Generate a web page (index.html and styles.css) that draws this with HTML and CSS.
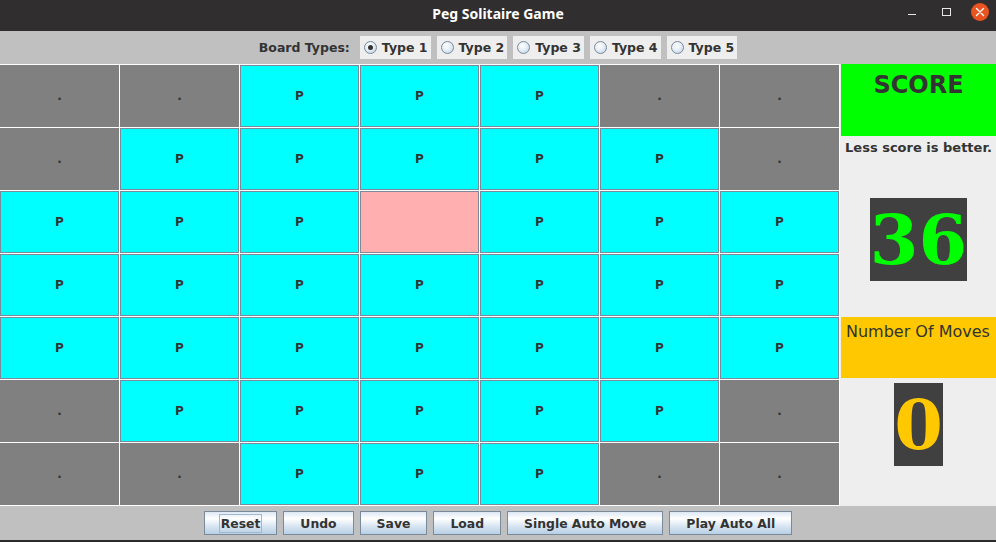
FILE: index.html
```html
<!DOCTYPE html>
<html>
<head>
<meta charset="utf-8">
<link rel="stylesheet" href="styles.css">
</head>
<body>
<div class="window">
  <header class="titlebar">
    <span class="title">Peg Solitaire Game</span>
    <div class="controls">
      <span class="ctl-min"></span>
      <span class="ctl-max"></span>
      <span class="ctl-close">
        <svg width="18" height="18" viewBox="0 0 18 18"><path d="M5.5 5.5 L12.5 12.5 M12.5 5.5 L5.5 12.5" stroke="#fff" stroke-width="1.4" stroke-linecap="round"/></svg>
      </span>
    </div>
  </header>
  <div class="toolbar">
    <span class="tb-label">Board Types:</span>
    <label class="radio"><span class="circle checked"></span>Type 1</label>
    <label class="radio"><span class="circle"></span>Type 2</label>
    <label class="radio"><span class="circle"></span>Type 3</label>
    <label class="radio"><span class="circle"></span>Type 4</label>
    <label class="radio"><span class="circle"></span>Type 5</label>
  </div>
  <div class="main">
    <div class="board">
      <div class="cell off">.</div><div class="cell off">.</div><div class="cell peg">P</div><div class="cell peg">P</div><div class="cell peg">P</div><div class="cell off">.</div><div class="cell off">.</div>
      <div class="cell off">.</div><div class="cell peg">P</div><div class="cell peg">P</div><div class="cell peg">P</div><div class="cell peg">P</div><div class="cell peg">P</div><div class="cell off">.</div>
      <div class="cell peg">P</div><div class="cell peg">P</div><div class="cell peg">P</div><div class="cell empty"></div><div class="cell peg">P</div><div class="cell peg">P</div><div class="cell peg">P</div>
      <div class="cell peg">P</div><div class="cell peg">P</div><div class="cell peg">P</div><div class="cell peg">P</div><div class="cell peg">P</div><div class="cell peg">P</div><div class="cell peg">P</div>
      <div class="cell peg">P</div><div class="cell peg">P</div><div class="cell peg">P</div><div class="cell peg">P</div><div class="cell peg">P</div><div class="cell peg">P</div><div class="cell peg">P</div>
      <div class="cell off">.</div><div class="cell peg">P</div><div class="cell peg">P</div><div class="cell peg">P</div><div class="cell peg">P</div><div class="cell peg">P</div><div class="cell off">.</div>
      <div class="cell off">.</div><div class="cell off">.</div><div class="cell peg">P</div><div class="cell peg">P</div><div class="cell peg">P</div><div class="cell off">.</div><div class="cell off">.</div>
    </div>
    <aside class="side">
      <div class="score-head">SCORE</div>
      <div class="score-note">Less score is better.</div>
      <div class="digits score-val">36</div>
      <div class="moves-head">Number Of Moves</div>
      <div class="digits moves-val">0</div>
    </aside>
  </div>
  <div class="actions">
    <button class="btn"><span class="focus">Reset</span></button>
    <button class="btn">Undo</button>
    <button class="btn">Save</button>
    <button class="btn">Load</button>
    <button class="btn">Single Auto Move</button>
    <button class="btn">Play Auto All</button>
  </div>
</div>
</body>
</html>
```
FILE: styles.css
```css
* { box-sizing: border-box; }
html, body { margin: 0; padding: 0; }
body {
  width: 996px;
  height: 542px;
  overflow: hidden;
  font-family: "DejaVu Sans", sans-serif;
  background: #c0c0c0;
}
.window { width: 996px; height: 542px; display: flex; flex-direction: column; }

.titlebar {
  height: 31px;
  flex: none;
  background: #302e2e;
  display: flex;
  align-items: center;
  justify-content: center;
  position: relative;
}
.title {
  font-family: "Noto Sans", sans-serif;
  font-weight: bold;
  font-size: 14px;
  color: #ffffff;
  margin-top: -5px;
}
.controls {
  position: absolute;
  right: 0;
  top: 0;
  height: 24px;
  display: flex;
  align-items: center;
}
.ctl-min { width: 8px; height: 1px; background: #e6e6e6; margin-top: 5px; margin-right: 26px; }
.ctl-max { width: 9px; height: 8px; border: 1px solid #e6e6e6; margin-right: 20px; }
.ctl-close {
  width: 18px; height: 18px; border-radius: 50%;
  background: #e95420;
  margin-right: 7px;
  display: flex;
}

.toolbar {
  height: 33px;
  flex: none;
  background: #c0c0c0;
  display: flex;
  align-items: flex-start;
  justify-content: center;
  padding-top: 5px;
  gap: 6px;
  font-weight: bold;
  font-size: 12.5px;
  color: #333333;
}
.tb-label { line-height: 23px; margin-right: 4px; }
.radio {
  height: 23px;
  background: #eeeeee;
  display: flex;
  align-items: center;
  padding: 0 3px 0 4px;
}
.circle {
  width: 13px; height: 13px;
  border-radius: 50%;
  border: 1px solid #7a8a99;
  background: radial-gradient(circle at 40% 35%, #ffffff 0%, #e6eef6 45%, #b8cfe5 100%);
  margin-right: 5px;
  display: flex;
  align-items: center;
  justify-content: center;
}
.circle.checked::after {
  content: "";
  width: 5px; height: 5px; border-radius: 50%;
  background: #333333;
}

.main {
  height: 442px;
  flex: none;
  display: flex;
}
.board {
  width: 840px;
  background: #ffffff;
  display: grid;
  grid-template-columns: repeat(7, 119px);
  grid-template-rows: repeat(7, 62px);
  gap: 1px;
  padding: 1px 1px 1px 0;
}
.cell {
  border: 1px solid #7a8a99;
  display: flex;
  align-items: center;
  justify-content: center;
  font-weight: bold;
  font-size: 12px;
  color: #333333;
}
.cell.off { background: #808080; border-color: #808080; }
.cell.peg { background: #00ffff; }
.cell.empty { background: #ffafaf; }

.side {
  width: 156px;
  background: #eeeeee;
  padding-left: 1px;
  display: flex;
  flex-direction: column;
}
.score-head {
  height: 72px;
  background: #00ff00;
  text-align: center;
  font-weight: bold;
  font-size: 24px;
  line-height: 28px;
  padding-top: 7px;
  color: #333333;
}
.score-note {
  margin-top: 4px;
  height: 16px;
  line-height: 16px;
  font-size: 13px;
  font-weight: bold;
  text-align: center;
  color: #333333;
}
.digits {
  align-self: center;
  height: 83px;
  line-height: 83px;
  font-family: "DejaVu Serif", serif;
  font-weight: bold;
  font-size: 70px;
  background: #404040;
}
.score-val { margin-top: 42px; color: #00ff00; }
.moves-head {
  margin-top: 36px;
  height: 61px;
  background: #ffc800;
  font-size: 16px;
  line-height: 19px;
  padding: 5px 0 0 5px;
  color: #333333;
}
.moves-val { margin-top: 5px; color: #ffc800; }

.actions {
  height: 36px;
  flex: none;
  background: #c0c0c0;
  border-bottom: 2px solid #2b2b2b;
  display: flex;
  justify-content: center;
  align-items: flex-start;
  padding-top: 5px;
  gap: 6px;
}
.btn {
  height: 24px;
  border: 1px solid #7a8a99;
  background: linear-gradient(#dde8f3 0%, #ffffff 30%, #dde8f3 60%, #b8cfe5 100%);
  font-family: "DejaVu Sans", sans-serif;
  font-weight: bold;
  font-size: 12.4px;
  color: #333333;
  padding: 0 16px;
  margin: 0;
  display: flex;
  align-items: center;
}
.focus { outline: 1px solid #a3b8cc; outline-offset: 1px; }
```
